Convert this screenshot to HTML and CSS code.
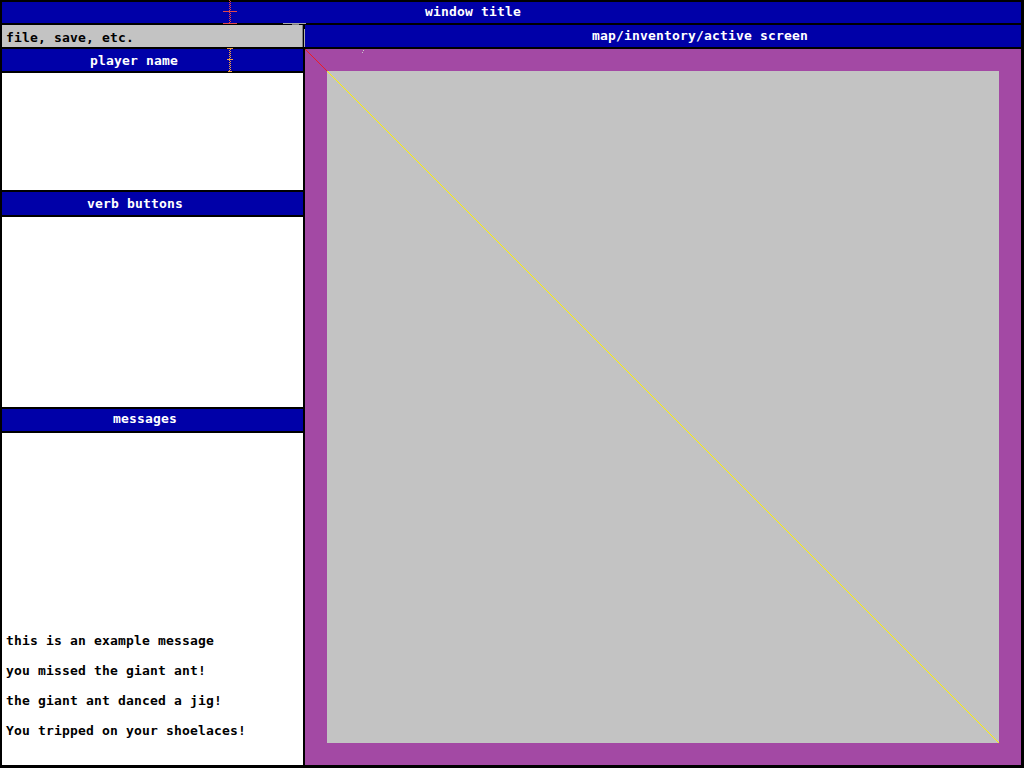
FILE: index.html
```html
<!DOCTYPE html>
<html>
<head>
<meta charset="utf-8">
<title>window title</title>
<link rel="stylesheet" href="styles.css">
</head>
<body>
<div class="app">
  <header class="bar title-bar">window title</header>
  <div class="file-menu">file, save, etc.</div>
  <div class="bar map-title">map/inventory/active screen</div>
  <aside class="side">
    <div class="bar side-head head-player">player name</div>
    <div class="panel panel-player"></div>
    <div class="bar side-head head-verbs">verb buttons</div>
    <div class="panel panel-verbs"></div>
    <div class="bar side-head head-messages">messages</div>
    <div class="panel panel-messages">
      <p class="msg">this is an example message</p>
      <p class="msg">you missed the giant ant!</p>
      <p class="msg">the giant ant danced a jig!</p>
      <p class="msg">You tripped on your shoelaces!</p>
    </div>
  </aside>
  <main class="map">
    <div class="canvas"></div>
    <svg class="diag" width="716" height="716" viewBox="0 0 716 716">
      <line x1="0" y1="0" x2="22" y2="22" stroke="#ed1c24" stroke-width="1"/>
      <line x1="22" y1="22" x2="694" y2="694" stroke="#fff200" stroke-width="1"/>
      <rect x="57" y="3" width="1" height="1" fill="#c8c8c8"/>
      <rect x="58" y="1" width="1" height="1" fill="#c8c8c8"/>
    </svg>
  </main>

  <svg class="cursor cursor-red" width="16" height="25" viewBox="0 0 16 25">
    <line x1="7.5" y1="0" x2="7.5" y2="24" stroke="#e04848" stroke-dasharray="1 1"/>
    <line x1="8.5" y1="1" x2="8.5" y2="24" stroke="#e04848" stroke-dasharray="1 1"/>
    <rect x="1" y="11" width="14" height="1" fill="#e04848"/>
    <rect x="1" y="23" width="14" height="1" fill="#e04848"/>
  </svg>
  <svg class="cursor cursor-orange" width="10" height="26" viewBox="0 0 10 26">
    <line x1="3.5" y1="0" x2="3.5" y2="24" stroke="#f0a040" stroke-dasharray="1 1"/>
    <line x1="4.5" y1="1" x2="4.5" y2="24" stroke="#f0a040" stroke-dasharray="1 1"/>
    <rect x="1" y="0" width="6" height="1" fill="#f0a040"/>
    <rect x="1" y="11" width="6" height="1" fill="#f0a040"/>
    <rect x="2" y="23" width="4" height="1" fill="#f0a040"/>
  </svg>
  <span class="grip grip-top"></span>
  <span class="grip grip-top-dark"></span>
  <span class="grip grip-side"></span>
</div>
</body>
</html>
```

FILE: styles.css
```css
html, body {
  margin: 0;
  padding: 0;
  background: #000;
}

body {
  width: 1024px;
  height: 768px;
  overflow: hidden;
  font-family: "DejaVu Sans Mono", "Liberation Mono", monospace;
  font-weight: bold;
  font-size: 13px;
  letter-spacing: 0.17px;
}

.app {
  position: relative;
  display: grid;
  grid-template-columns: 301px 716px;
  grid-template-rows: 21px 22px 716px;
  gap: 2px;
  padding: 2px 3px 3px 2px;
  width: 1024px;
  height: 768px;
  box-sizing: border-box;
}

.bar {
  background: #0000a8;
  color: #fff;
  white-space: nowrap;
  box-sizing: border-box;
  overflow: hidden;
}

.title-bar {
  grid-column: 1 / 3;
  line-height: 19px;
  padding-left: 423px;
}

.file-menu {
  background: #c3c3c3;
  color: #000;
  line-height: 19px;
  padding: 3px 0 0 4px;
  border-right: 1px solid #808080;
  box-sizing: border-box;
  overflow: hidden;
}

.map-title {
  line-height: 22px;
  padding-left: 287px;
}

.side {
  display: flex;
  flex-direction: column;
  gap: 2px;
}

.side-head {
  height: 22px;
  line-height: 22px;
  flex: none;
}

.head-player { padding: 1px 0 0 88px; line-height: 21px; }
.head-verbs { padding-left: 85px; height: 23px; line-height: 23px; }
.head-messages { padding-left: 111px; line-height: 20px; }

.panel {
  background: #fff;
  color: #000;
  flex: none;
}

.panel-player { height: 117px; }
.panel-verbs { height: 190px; }

.panel-messages {
  flex: 1;
  display: flex;
  flex-direction: column;
  justify-content: flex-end;
  padding: 0 0 19px 4px;
}

.msg {
  margin: 0;
  line-height: 30px;
  white-space: nowrap;
}

.map {
  position: relative;
  background: #a349a4;
  padding: 22px;
  box-sizing: border-box;
}

.canvas {
  width: 100%;
  height: 100%;
  background: #c3c3c3;
}

.diag {
  position: absolute;
  left: 0;
  top: 0;
  shape-rendering: crispEdges;
}

.cursor {
  position: absolute;
  shape-rendering: crispEdges;
}

.cursor-red {
  left: 222px;
  top: 0;
}

.cursor-orange {
  left: 226px;
  top: 48px;
}

.grip {
  position: absolute;
  display: block;
}

.grip-top {
  left: 283px;
  top: 23px;
  width: 23px;
  height: 1px;
  background: #a8a8a8;
}

.grip-top-dark {
  left: 292px;
  top: 24px;
  width: 7px;
  height: 1px;
  background: #808080;
}

.grip-side {
  left: 304px;
  top: 29px;
  width: 1px;
  height: 18px;
  background: #b0b0b0;
}
```
